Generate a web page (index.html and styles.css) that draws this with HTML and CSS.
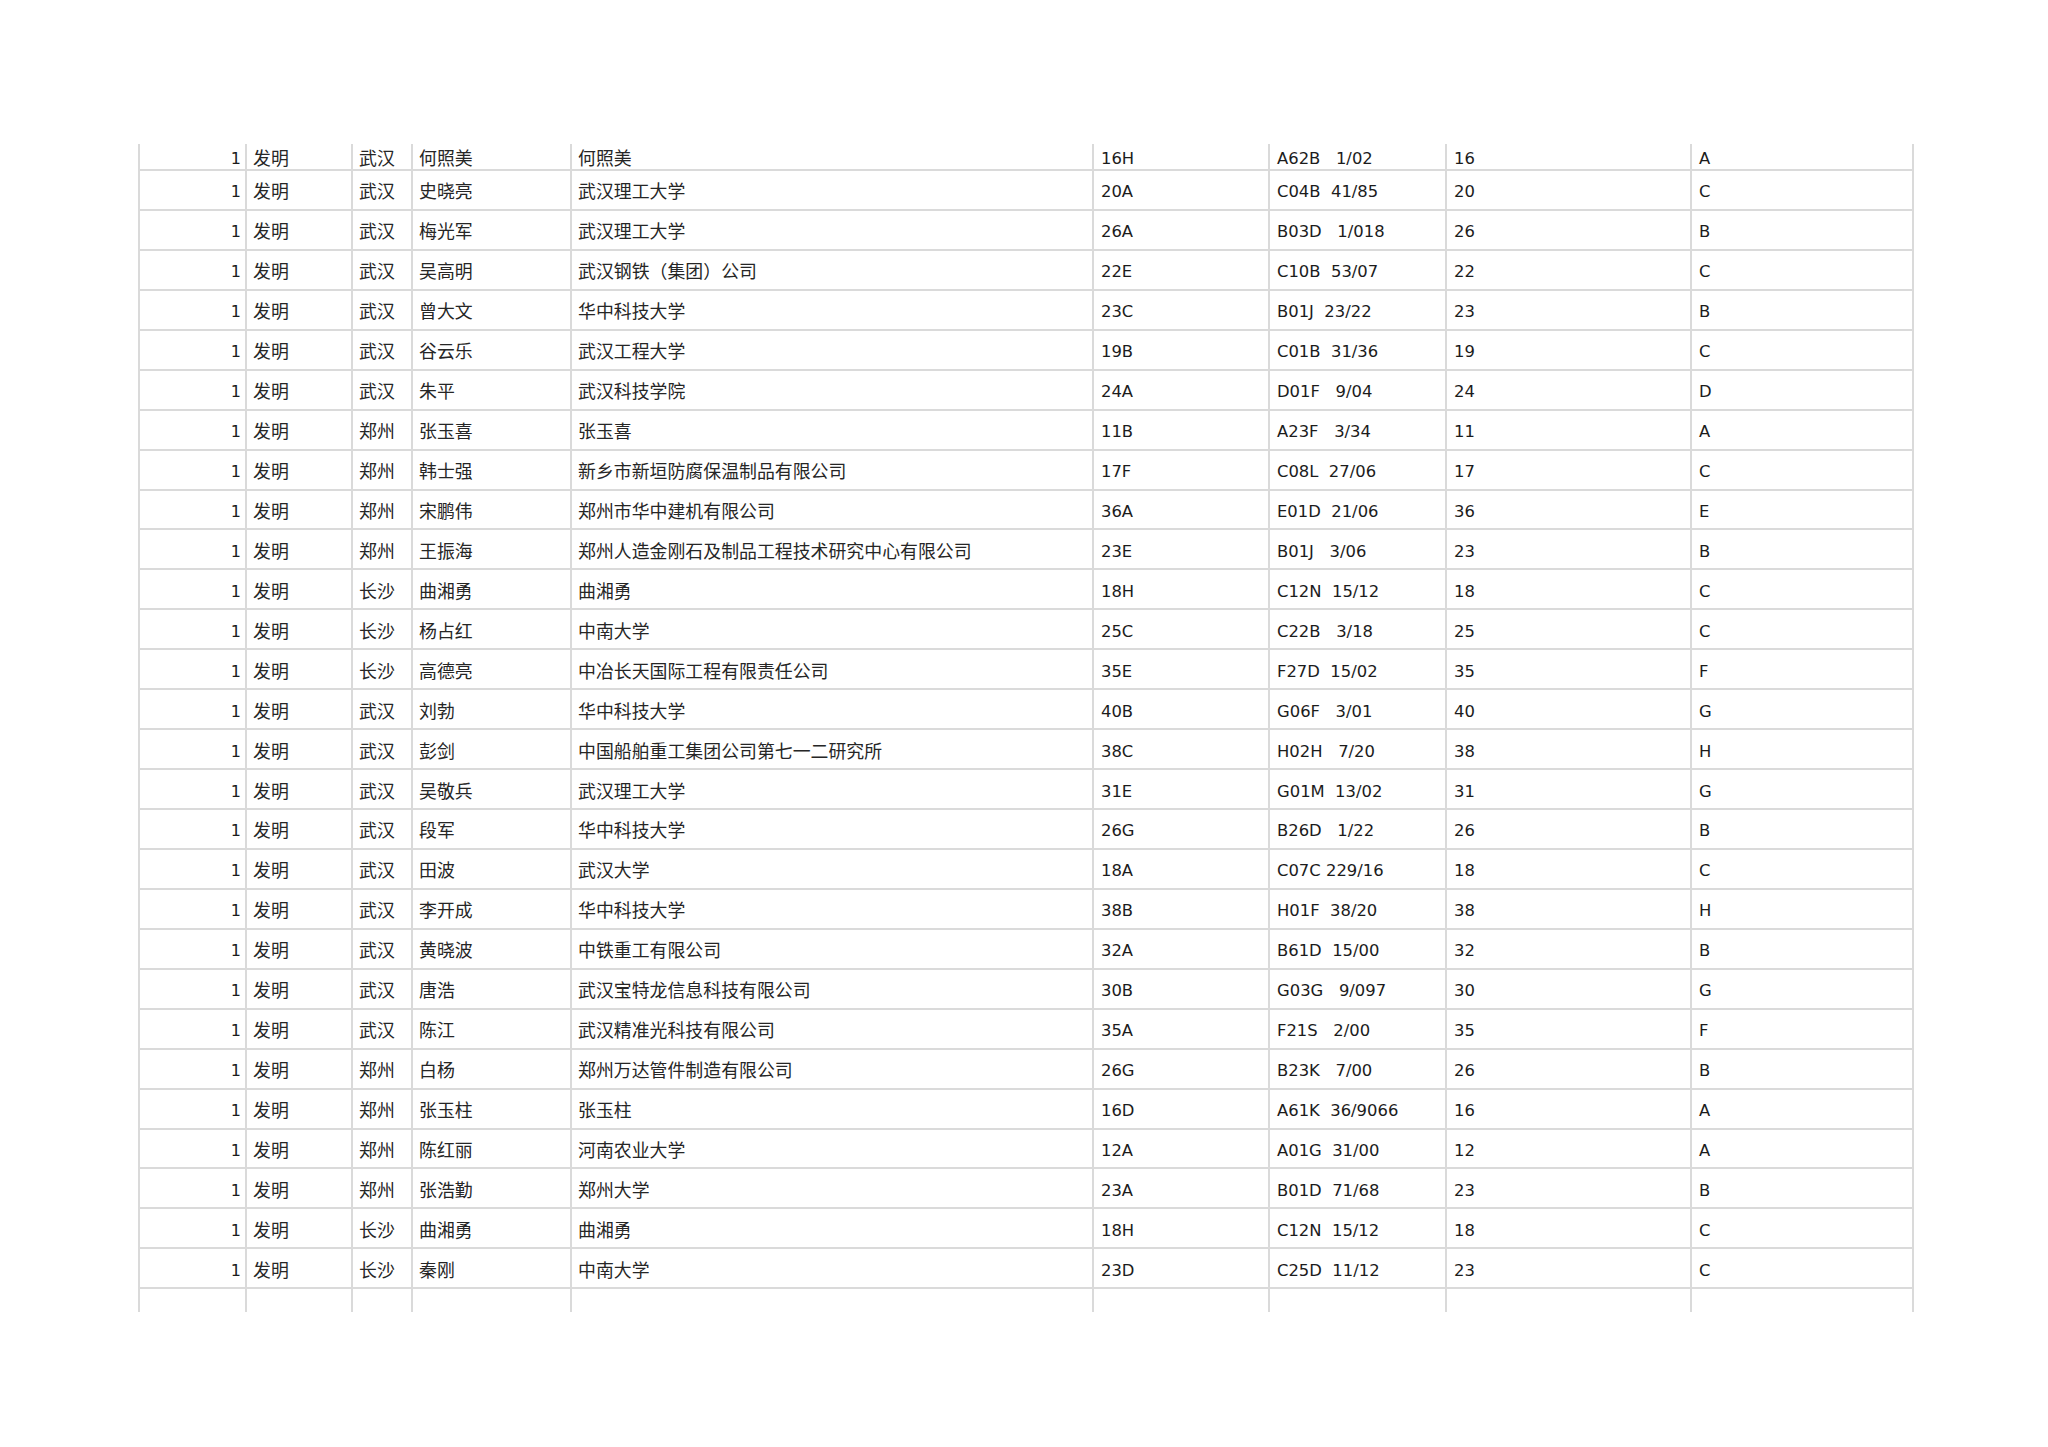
FILE: index.html
```html
<!DOCTYPE html>
<html lang="zh-CN">
<head>
<meta charset="utf-8">
<title>专利列表</title>
<link rel="stylesheet" href="styles.css">
</head>
<body>
<table class="sheet">
<colgroup>
<col class="c-num"><col class="c-type"><col class="c-city"><col class="c-inv"><col class="c-app"><col class="c-code"><col class="c-ipc"><col class="c-cls"><col class="c-sec">
</colgroup>
<tbody>
<tr class="row first"><td class="num">1</td><td class="zh">发明</td><td class="zh">武汉</td><td class="zh">何照美</td><td class="zh">何照美</td><td class="lat">16H</td><td class="lat ipc">A62B   1/02</td><td class="lat">16</td><td class="lat">A</td></tr>
<tr class="row"><td class="num">1</td><td class="zh">发明</td><td class="zh">武汉</td><td class="zh">史晓亮</td><td class="zh">武汉理工大学</td><td class="lat">20A</td><td class="lat ipc">C04B  41/85</td><td class="lat">20</td><td class="lat">C</td></tr>
<tr class="row"><td class="num">1</td><td class="zh">发明</td><td class="zh">武汉</td><td class="zh">梅光军</td><td class="zh">武汉理工大学</td><td class="lat">26A</td><td class="lat ipc">B03D   1/018</td><td class="lat">26</td><td class="lat">B</td></tr>
<tr class="row"><td class="num">1</td><td class="zh">发明</td><td class="zh">武汉</td><td class="zh">吴高明</td><td class="zh">武汉钢铁（集团）公司</td><td class="lat">22E</td><td class="lat ipc">C10B  53/07</td><td class="lat">22</td><td class="lat">C</td></tr>
<tr class="row"><td class="num">1</td><td class="zh">发明</td><td class="zh">武汉</td><td class="zh">曾大文</td><td class="zh">华中科技大学</td><td class="lat">23C</td><td class="lat ipc">B01J  23/22</td><td class="lat">23</td><td class="lat">B</td></tr>
<tr class="row"><td class="num">1</td><td class="zh">发明</td><td class="zh">武汉</td><td class="zh">谷云乐</td><td class="zh">武汉工程大学</td><td class="lat">19B</td><td class="lat ipc">C01B  31/36</td><td class="lat">19</td><td class="lat">C</td></tr>
<tr class="row"><td class="num">1</td><td class="zh">发明</td><td class="zh">武汉</td><td class="zh">朱平</td><td class="zh">武汉科技学院</td><td class="lat">24A</td><td class="lat ipc">D01F   9/04</td><td class="lat">24</td><td class="lat">D</td></tr>
<tr class="row"><td class="num">1</td><td class="zh">发明</td><td class="zh">郑州</td><td class="zh">张玉喜</td><td class="zh">张玉喜</td><td class="lat">11B</td><td class="lat ipc">A23F   3/34</td><td class="lat">11</td><td class="lat">A</td></tr>
<tr class="row"><td class="num">1</td><td class="zh">发明</td><td class="zh">郑州</td><td class="zh">韩士强</td><td class="zh">新乡市新垣防腐保温制品有限公司</td><td class="lat">17F</td><td class="lat ipc">C08L  27/06</td><td class="lat">17</td><td class="lat">C</td></tr>
<tr class="row"><td class="num">1</td><td class="zh">发明</td><td class="zh">郑州</td><td class="zh">宋鹏伟</td><td class="zh">郑州市华中建机有限公司</td><td class="lat">36A</td><td class="lat ipc">E01D  21/06</td><td class="lat">36</td><td class="lat">E</td></tr>
<tr class="row"><td class="num">1</td><td class="zh">发明</td><td class="zh">郑州</td><td class="zh">王振海</td><td class="zh">郑州人造金刚石及制品工程技术研究中心有限公司</td><td class="lat">23E</td><td class="lat ipc">B01J   3/06</td><td class="lat">23</td><td class="lat">B</td></tr>
<tr class="row"><td class="num">1</td><td class="zh">发明</td><td class="zh">长沙</td><td class="zh">曲湘勇</td><td class="zh">曲湘勇</td><td class="lat">18H</td><td class="lat ipc">C12N  15/12</td><td class="lat">18</td><td class="lat">C</td></tr>
<tr class="row"><td class="num">1</td><td class="zh">发明</td><td class="zh">长沙</td><td class="zh">杨占红</td><td class="zh">中南大学</td><td class="lat">25C</td><td class="lat ipc">C22B   3/18</td><td class="lat">25</td><td class="lat">C</td></tr>
<tr class="row"><td class="num">1</td><td class="zh">发明</td><td class="zh">长沙</td><td class="zh">高德亮</td><td class="zh">中冶长天国际工程有限责任公司</td><td class="lat">35E</td><td class="lat ipc">F27D  15/02</td><td class="lat">35</td><td class="lat">F</td></tr>
<tr class="row"><td class="num">1</td><td class="zh">发明</td><td class="zh">武汉</td><td class="zh">刘勃</td><td class="zh">华中科技大学</td><td class="lat">40B</td><td class="lat ipc">G06F   3/01</td><td class="lat">40</td><td class="lat">G</td></tr>
<tr class="row"><td class="num">1</td><td class="zh">发明</td><td class="zh">武汉</td><td class="zh">彭剑</td><td class="zh">中国船舶重工集团公司第七一二研究所</td><td class="lat">38C</td><td class="lat ipc">H02H   7/20</td><td class="lat">38</td><td class="lat">H</td></tr>
<tr class="row"><td class="num">1</td><td class="zh">发明</td><td class="zh">武汉</td><td class="zh">吴敬兵</td><td class="zh">武汉理工大学</td><td class="lat">31E</td><td class="lat ipc">G01M  13/02</td><td class="lat">31</td><td class="lat">G</td></tr>
<tr class="row"><td class="num">1</td><td class="zh">发明</td><td class="zh">武汉</td><td class="zh">段军</td><td class="zh">华中科技大学</td><td class="lat">26G</td><td class="lat ipc">B26D   1/22</td><td class="lat">26</td><td class="lat">B</td></tr>
<tr class="row"><td class="num">1</td><td class="zh">发明</td><td class="zh">武汉</td><td class="zh">田波</td><td class="zh">武汉大学</td><td class="lat">18A</td><td class="lat ipc">C07C 229/16</td><td class="lat">18</td><td class="lat">C</td></tr>
<tr class="row"><td class="num">1</td><td class="zh">发明</td><td class="zh">武汉</td><td class="zh">李开成</td><td class="zh">华中科技大学</td><td class="lat">38B</td><td class="lat ipc">H01F  38/20</td><td class="lat">38</td><td class="lat">H</td></tr>
<tr class="row"><td class="num">1</td><td class="zh">发明</td><td class="zh">武汉</td><td class="zh">黄晓波</td><td class="zh">中铁重工有限公司</td><td class="lat">32A</td><td class="lat ipc">B61D  15/00</td><td class="lat">32</td><td class="lat">B</td></tr>
<tr class="row"><td class="num">1</td><td class="zh">发明</td><td class="zh">武汉</td><td class="zh">唐浩</td><td class="zh">武汉宝特龙信息科技有限公司</td><td class="lat">30B</td><td class="lat ipc">G03G   9/097</td><td class="lat">30</td><td class="lat">G</td></tr>
<tr class="row"><td class="num">1</td><td class="zh">发明</td><td class="zh">武汉</td><td class="zh">陈江</td><td class="zh">武汉精准光科技有限公司</td><td class="lat">35A</td><td class="lat ipc">F21S   2/00</td><td class="lat">35</td><td class="lat">F</td></tr>
<tr class="row"><td class="num">1</td><td class="zh">发明</td><td class="zh">郑州</td><td class="zh">白杨</td><td class="zh">郑州万达管件制造有限公司</td><td class="lat">26G</td><td class="lat ipc">B23K   7/00</td><td class="lat">26</td><td class="lat">B</td></tr>
<tr class="row"><td class="num">1</td><td class="zh">发明</td><td class="zh">郑州</td><td class="zh">张玉柱</td><td class="zh">张玉柱</td><td class="lat">16D</td><td class="lat ipc">A61K  36/9066</td><td class="lat">16</td><td class="lat">A</td></tr>
<tr class="row"><td class="num">1</td><td class="zh">发明</td><td class="zh">郑州</td><td class="zh">陈红丽</td><td class="zh">河南农业大学</td><td class="lat">12A</td><td class="lat ipc">A01G  31/00</td><td class="lat">12</td><td class="lat">A</td></tr>
<tr class="row"><td class="num">1</td><td class="zh">发明</td><td class="zh">郑州</td><td class="zh">张浩勤</td><td class="zh">郑州大学</td><td class="lat">23A</td><td class="lat ipc">B01D  71/68</td><td class="lat">23</td><td class="lat">B</td></tr>
<tr class="row"><td class="num">1</td><td class="zh">发明</td><td class="zh">长沙</td><td class="zh">曲湘勇</td><td class="zh">曲湘勇</td><td class="lat">18H</td><td class="lat ipc">C12N  15/12</td><td class="lat">18</td><td class="lat">C</td></tr>
<tr class="row"><td class="num">1</td><td class="zh">发明</td><td class="zh">长沙</td><td class="zh">秦刚</td><td class="zh">中南大学</td><td class="lat">23D</td><td class="lat ipc">C25D  11/12</td><td class="lat">23</td><td class="lat">C</td></tr>
<tr class="row tail"><td></td><td></td><td></td><td></td><td></td><td></td><td></td><td></td><td></td></tr>
</tbody>
</table>
</body>
</html>
```
FILE: styles.css
```css
html, body {
  margin: 0;
  padding: 0;
  background: #ffffff;
}

body {
  padding: 144px 0 0 138px;
  color: #1c1c1c;
  font-family: "DejaVu Sans", "Noto Sans CJK SC", sans-serif;
}

.sheet {
  border-collapse: collapse;
  table-layout: fixed;
  width: 1776px;
}

.c-num { width: 107px; }
.c-type { width: 106px; }
.c-city { width: 60px; }
.c-inv { width: 159px; }
.c-app { width: 522px; }
.c-code { width: 176px; }
.c-ipc { width: 177px; }
.c-cls { width: 245px; }
.c-sec { width: 222px; }

.sheet td {
  border: 2px solid #dadada;
  padding: 0 4px 0 6px;
  height: 39.95px;
  box-sizing: border-box;
  vertical-align: middle;
  white-space: nowrap;
  overflow: hidden;
}

.sheet .row.first td {
  border-top: none;
  height: 26px;
}

.sheet .row.tail td {
  border-bottom: none;
  height: 24px;
}

.sheet .num {
  text-align: right;
  font-family: "DejaVu Sans", sans-serif;
  font-size: 16px;
  line-height: 20px;
  padding-top: 5px;
}

.sheet .zh {
  font-family: "Noto Sans CJK SC", "Noto Sans CJK TC", sans-serif;
  font-size: 17.9px;
  line-height: 20px;
  padding-top: 1px;
  color: #262626;
}

.sheet .lat {
  font-family: "DejaVu Sans", "Noto Sans CJK SC", sans-serif;
  font-size: 16.4px;
  line-height: 20px;
  padding-top: 5px;
  padding-left: 7px;
}

.sheet .ipc {
  white-space: pre;
}
```
